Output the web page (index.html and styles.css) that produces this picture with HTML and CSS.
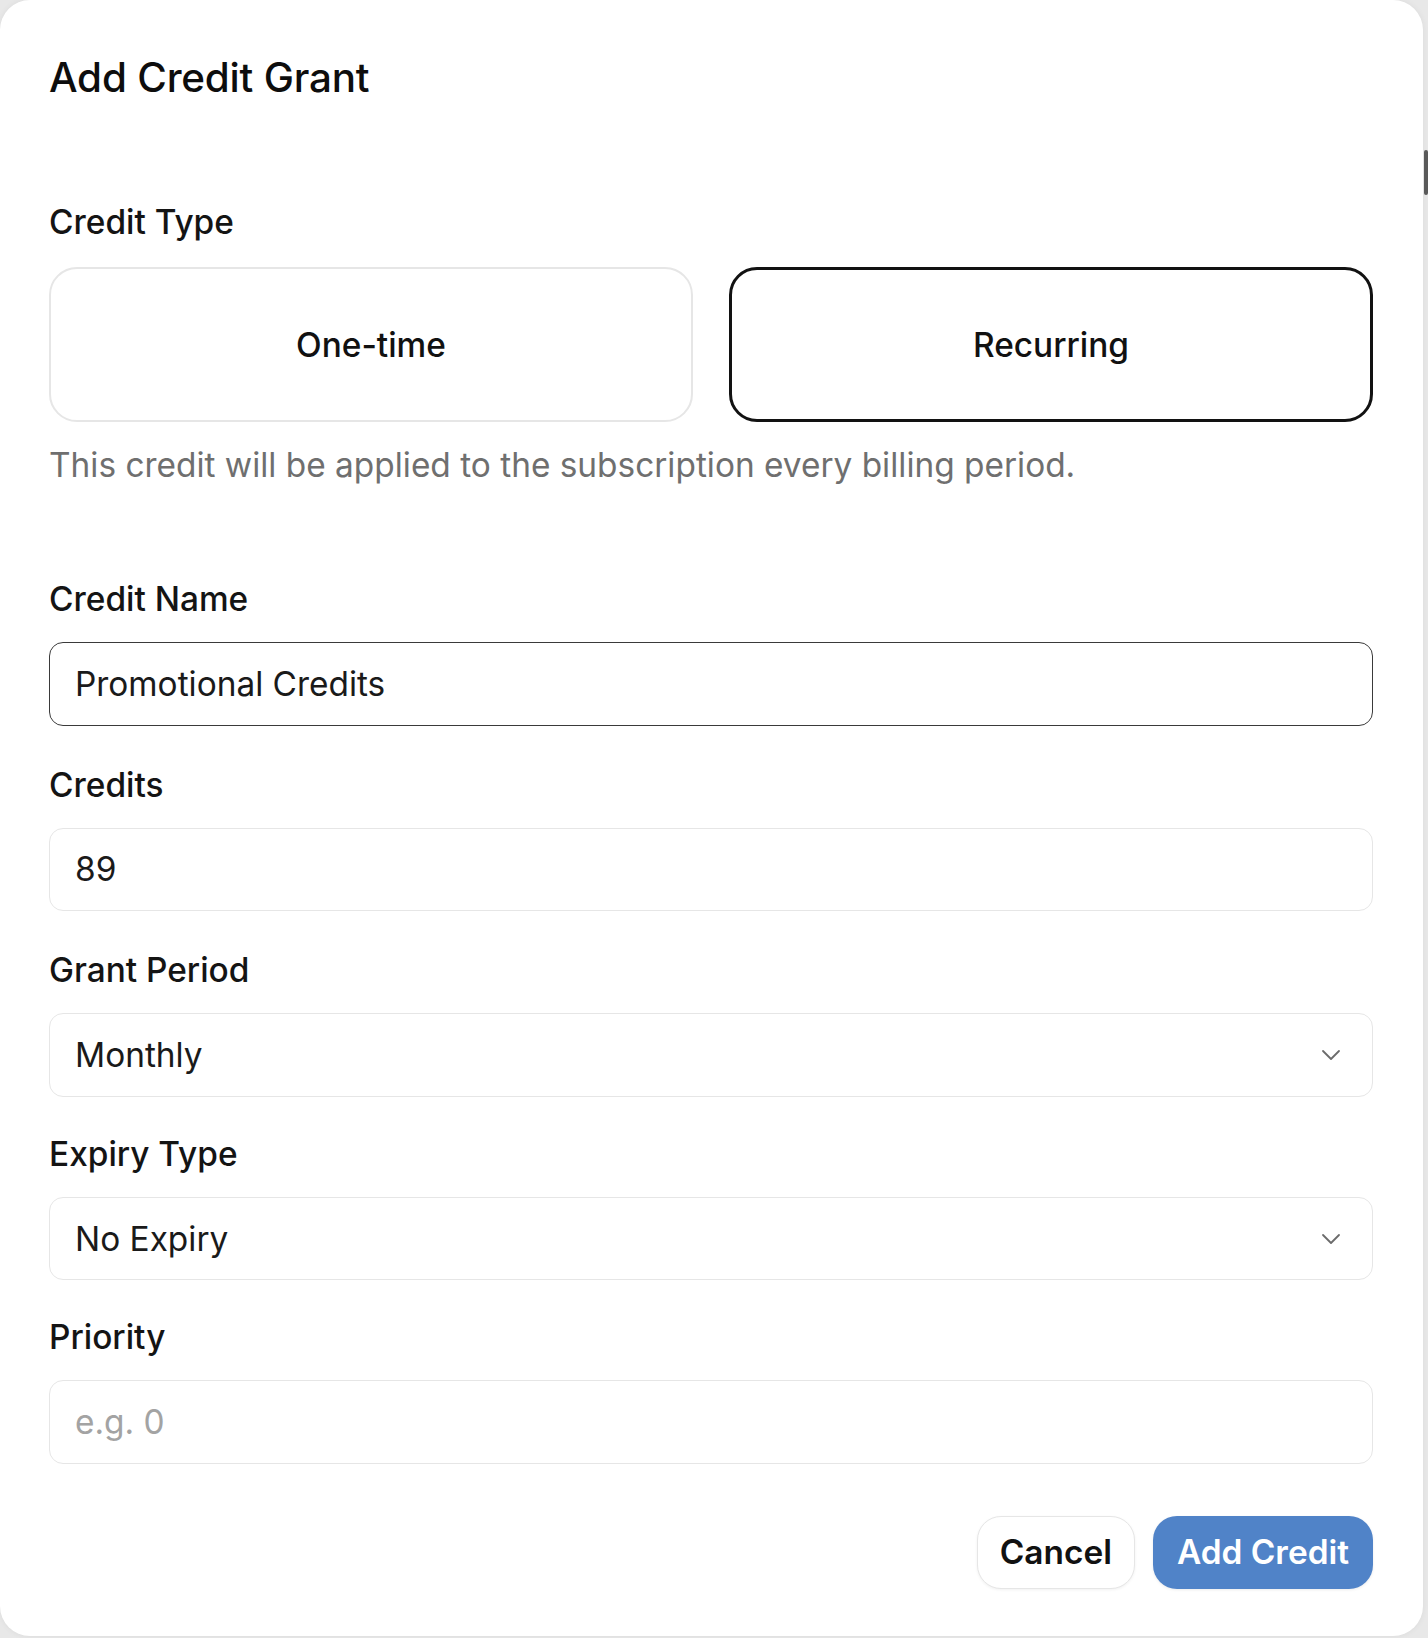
FILE: index.html
```html
<!DOCTYPE html>
<html lang="en">
<head>
<meta charset="utf-8">
<title>Add Credit Grant</title>
<link rel="stylesheet" href="styles.css">
</head>
<body>
<div class="modal">
  <h2 class="title">Add Credit Grant</h2>

  <div class="label label-first">Credit Type</div>
  <div class="type-options">
    <div class="type-option">One-time</div>
    <div class="type-option selected">Recurring</div>
  </div>
  <p class="help">This credit will be applied to the subscription every billing period.</p>

  <div class="label label-name">Credit Name</div>
  <div class="input focused">Promotional Credits</div>

  <div class="label">Credits</div>
  <div class="input">89</div>

  <div class="label">Grant Period</div>
  <div class="input select">
    <span>Monthly</span>
    <svg class="chevron" width="20" height="12" viewBox="0 0 20 12"><path d="M2 2 L10 10 L18 2" fill="none" stroke="#6b6b6b" stroke-width="1.8" stroke-linecap="round" stroke-linejoin="round"/></svg>
  </div>

  <div class="label label-tight">Expiry Type</div>
  <div class="input select">
    <span>No Expiry</span>
    <svg class="chevron" width="20" height="12" viewBox="0 0 20 12"><path d="M2 2 L10 10 L18 2" fill="none" stroke="#6b6b6b" stroke-width="1.8" stroke-linecap="round" stroke-linejoin="round"/></svg>
  </div>

  <div class="label label-tight">Priority</div>
  <div class="input placeholder">e.g. 0</div>

  <div class="actions">
    <button class="btn btn-cancel">Cancel</button>
    <button class="btn btn-primary">Add Credit</button>
  </div>
</div>
<div class="scroll-thumb"></div>
</body>
</html>
```

FILE: styles.css
```css
html, body {
  margin: 0;
  padding: 0;
}

body {
  background: #e8e8e8;
  font-family: Inter, "Noto Sans", "Liberation Sans", sans-serif;
  color: #111111;
  width: 1428px;
  height: 1638px;
  overflow: hidden;
}

.modal {
  box-sizing: border-box;
  width: 1423px;
  height: 1636px;
  background: #ffffff;
  border-radius: 30px;
  padding: 54px 50px 47px 49px;
  display: flex;
  flex-direction: column;
  box-shadow: 0 0 6px rgba(0, 0, 0, 0.06);
}

.title {
  margin: 0;
  font-size: 40.4px;
  line-height: 48px;
  font-weight: 500;
  color: #0d0d0d;
  letter-spacing: -0.2px;
}

.label {
  font-size: 33.4px;
  line-height: 40px;
  font-weight: 500;
  color: #141414;
  margin-top: 39px;
}

.label-first {
  margin-top: 100px;
}

.label-name {
  margin-top: 94px;
}

.label-tight {
  margin-top: 37px;
}

.type-options {
  margin-top: 25px;
  display: grid;
  grid-template-columns: 1fr 1fr;
  gap: 36px;
}

.type-option {
  box-sizing: border-box;
  height: 155px;
  border: 2px solid #e6e6e6;
  border-radius: 28px;
  display: flex;
  align-items: center;
  justify-content: center;
  font-size: 33.4px;
  font-weight: 500;
  color: #111111;
}

.type-option.selected {
  border: 3px solid #121212;
}

.help {
  margin: 23px 0 0 0;
  font-size: 33.4px;
  line-height: 40px;
  color: #6f6f6f;
  font-weight: 400;
}

.input {
  box-sizing: border-box;
  margin-top: 23px;
  height: 84px;
  border: 1.5px solid #e6e6e6;
  border-radius: 14px;
  padding: 0 25px;
  display: flex;
  align-items: center;
  font-size: 33.4px;
  color: #1a1a1a;
}

.input.focused {
  border-color: #3a3a3a;
}

.input.placeholder {
  color: #a3a3a3;
}

.select {
  justify-content: space-between;
  padding-right: 31px;
}

.chevron {
  display: block;
}

.actions {
  margin-top: 52px;
  display: flex;
  justify-content: flex-end;
  gap: 18px;
}

.btn {
  box-sizing: border-box;
  height: 73px;
  padding: 0 24px;
  border-radius: 24px;
  font-family: Inter, "Noto Sans", "Liberation Sans", sans-serif;
  font-size: 33.4px;
  font-weight: 600;
  cursor: pointer;
}

.btn-cancel {
  padding: 0 22px;
  background: #ffffff;
  color: #111111;
  border: 1.5px solid #e6e6e6;
  box-shadow: 0 1px 3px rgba(0, 0, 0, 0.06);
}

.btn-primary {
  background: #5083c8;
  color: #ffffff;
  border: none;
  box-shadow: 0 1px 3px rgba(0, 0, 0, 0.08);
}

.scroll-thumb {
  position: absolute;
  left: 1424px;
  top: 150px;
  width: 4px;
  height: 45px;
  background: #5a5a5a;
  border-radius: 2px;
}
```
